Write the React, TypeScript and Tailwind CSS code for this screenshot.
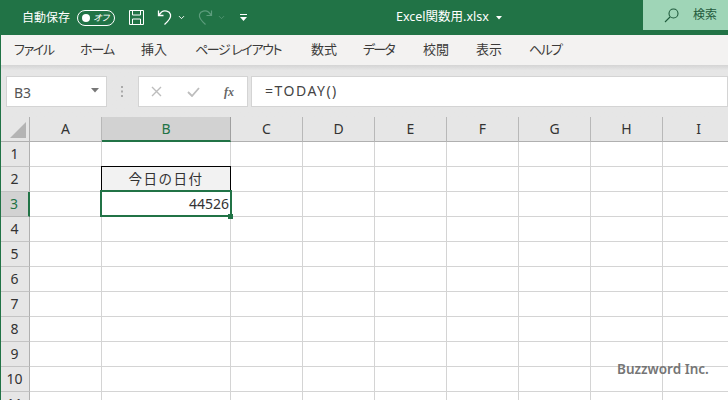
import { ChevronDown } from "lucide-react";

const FONT = "font-['Noto_Sans','Noto_Sans_CJK_JP',sans-serif]";
const COLS = [
  { key: "A", width: "w-[72px]" },
  { key: "B", width: "w-[129px]" },
  { key: "C", width: "w-[72px]" },
  { key: "D", width: "w-[72px]" },
  { key: "E", width: "w-[72px]" },
  { key: "F", width: "w-[72px]" },
  { key: "G", width: "w-[72px]" },
  { key: "H", width: "w-[72px]" },
  { key: "I", width: "w-[72px]" },
];
const ROWS = [1, 2, 3, 4, 5, 6, 7, 8, 9, 10, 11];
const TABS = [
  { label: "ファイル", width: "w-[66px] tracking-[-1.3px]" },
  { label: "ホーム", width: "w-[61px] tracking-[-1px]" },
  { label: "挿入", width: "w-[54px]" },
  { label: "ページ レイアウト", width: "w-[116px] tracking-[-1.4px]" },
  { label: "数式", width: "w-[52px]" },
  { label: "データ", width: "w-[60px] tracking-[-1.8px]" },
  { label: "校閲", width: "w-[53px]" },
  { label: "表示", width: "w-[53px]" },
  { label: "ヘルプ", width: "w-[60px] tracking-[-1.6px]" },
];

function TitleBar() {
  return (
    <div className="flex h-[35px] items-center bg-[#217346] text-white [&>*]:shrink-0">
      <span className="ml-[22px] w-[55px] text-[12px] leading-none">自動保存</span>
      <div className="flex h-[16px] w-[38px] items-center justify-between rounded-full border border-white pl-[4px] pr-[5px]">
        <span className="h-[8px] w-[8px] rounded-full bg-white" />
        <span className="text-[9px] italic leading-none [font-feature-settings:'palt']">オフ</span>
      </div>
      {/* save */}
      <svg className="ml-[13px]" width="17" height="17" viewBox="0 0 17 17" fill="none" stroke="#fff" strokeWidth="1">
        <path d="M1.500 1.500h14v14h-14z" />
        <path d="M4.500 1.500v4.500h8v-4.500M4.500 15.500v-5.500h8v5.500" />
      </svg>
      {/* undo */}
      <svg className="ml-[12px]" width="16" height="17" viewBox="0 0 16 17" fill="none" stroke="#fff" strokeWidth="1.300">
        <path d="M1.500 1.500v5h5M1.500 6.500l3-3.500c3-2 8-1 9 2.500 .7 3-2 6.500-6 10" />
      </svg>
      <ChevronDown className="ml-[4px]" size={9} strokeWidth={2.5} />
      {/* redo, disabled */}
      <svg className="ml-[11px]" width="16" height="17" viewBox="0 0 16 17" fill="none" stroke="#5c9c7c" strokeWidth="1.200">
        <path d="M14.500 1.500v5h-5M14.500 6.500l-3-3.500c-3-2-8-1-9 2.500-.7 3 2 6.500 6 10" />
      </svg>
      <ChevronDown className="ml-[4px] text-[#5c9c7c]" size={9} strokeWidth={2} />
      {/* customize */}
      <svg className="ml-[13px]" width="9" height="9" viewBox="0 0 9 9" fill="#fff">
        <path d="M1 1h7v1H1zM1 4h7L4.500 8z" />
      </svg>
      <span className="ml-[148px] w-[100px] text-[12.500px] leading-none">Excel関数用.xlsx</span>
      <svg width="6" height="4" viewBox="0 0 6 4" fill="#fff">
        <path d="M0 0h6L3 3.500z" />
      </svg>
      <div className="ml-[141px] flex h-[30px] w-[85px] items-center self-start bg-[#9fd5b7] text-[#1f5a3c]">
        <svg className="ml-[21px]" width="15" height="15" viewBox="0 0 15 15" fill="none" stroke="#1f5a3c" strokeWidth="1.100">
          <circle cx="9.500" cy="5.500" r="4.500" />
          <path d="M6 9l-5 5" />
        </svg>
        <span className="ml-[14px] text-[12px] leading-none">検索</span>
      </div>
    </div>
  );
}

function Ribbon() {
  return (
    <div className="flex h-[30px] items-center bg-[#f3f2f1] pb-[1px] pl-[14px] text-[13px] text-[#3b3a39] [font-feature-settings:'palt']">
      {TABS.map((t) => (
        <span key={t.label} className={`${t.width} whitespace-nowrap leading-none`}>
          {t.label}
        </span>
      ))}
    </div>
  );
}

function FormulaBar() {
  return (
    <div className="h-[52px] bg-gradient-to-b from-[#d4d4d4] from-0% via-[#e6e6e6] via-10% to-[#e6e6e6] pl-[6px] pt-[11px]">
      <div className="flex h-[31px] items-stretch">
        <div className="flex w-[101px] items-center justify-between border border-[#d4d4d4] bg-white pl-[7px] pr-[7px]">
          <span className="pt-[3px] text-[14px] leading-none text-[#555]">B3</span>
          <svg className="mb-[3px]" width="8" height="5" viewBox="0 0 8 5" fill="#777">
            <path d="M0 0h8L4 4.500z" />
          </svg>
        </div>
        <div className="flex w-[31px] items-center justify-center">
          <svg width="3" height="11" viewBox="0 0 3 11" fill="#aaa">
            <path d="M0 0h2v2H0zM0 4.500h2v2H0zM0 9h2v2H0z" />
          </svg>
        </div>
        <div className="flex w-[110px] items-center border border-[#d4d4d4] bg-white pl-[12px]">
          <svg width="11" height="11" viewBox="0 0 11 11" fill="none" stroke="#bdbdbd" strokeWidth="1.400">
            <path d="M1 1l9 9M10 1l-9 9" />
          </svg>
          <svg className="ml-[25px]" width="13" height="11" viewBox="0 0 13 11" fill="none" stroke="#bdbdbd" strokeWidth="1.800">
            <path d="M1 6l4 4 7-8" />
          </svg>
          <span className="ml-[24px] font-['Liberation_Serif',serif] text-[12px] font-bold italic leading-none text-[#666]">
            fx
          </span>
        </div>
        <div className="ml-[3px] flex flex-1 items-center border border-[#d4d4d4] bg-white pb-[1px] pl-[13px]">
          <span className="text-[14px] leading-none tracking-[1.500px] text-[#444]">=TODAY()</span>
        </div>
      </div>
    </div>
  );
}

function Cell({ col, row }: { col: string; row: number }) {
  const width = COLS.find((c) => c.key === col)!.width;
  if (col === "B" && row === 2) {
    return (
      <div className={`${width} relative flex shrink-0 items-center justify-center border-r border-b border-[#d4d4d4] bg-[#f2f2f2] text-[13.500px] tracking-[1.500px] text-[#333]`}>
        今日の日付
        <div className="absolute -left-[1px] -top-[1px] -right-[1px] bottom-[-1px] border border-black" />
      </div>
    );
  }
  if (col === "B" && row === 3) {
    return (
      <div className={`${width} relative z-10 flex shrink-0 items-center justify-end border-r border-b border-[#d4d4d4] pb-[1px] pr-[1px] text-[14px] text-[#333]`}>
        44526
        <div className="absolute -left-[2px] -top-[2px] -right-[2px] -bottom-[1px] border-2 border-[#217346]" />
        <div className="absolute -bottom-[3px] -right-[3px] h-[5px] w-[5px] bg-[#217346]" />
      </div>
    );
  }
  return <div className={`${width} shrink-0 border-r border-b border-[#d4d4d4]`} />;
}

function Sheet() {
  return (
    <div className="relative bg-white text-[#333]">
      <div className="flex h-[25px] bg-[#e6e6e6]">
        <div className="flex w-[30px] shrink-0 items-end justify-end border-r border-b border-[#b0b0b0] p-[2px]">
          <svg width="18" height="18" viewBox="0 0 18 18" fill="#b4b4b4">
            <path d="M17 1v16H1z" />
          </svg>
        </div>
        {COLS.map((c) => (
          <div
            key={c.key}
            className={
              c.key === "B"
                ? `${c.width} flex shrink-0 items-center justify-center border-r border-b-2 border-r-[#a0a0a0] border-b-[#217346] bg-[#d2d2d2] text-[14px] text-[#217346]`
                : `${c.width} flex shrink-0 items-center justify-center border-r border-b border-r-[#b8b8b8] border-b-[#b0b0b0] pb-[1px] text-[14px]`
            }
          >
            {c.key}
          </div>
        ))}
      </div>
      {ROWS.map((r) => (
        <div key={r} className="flex h-[25px]">
          <div
            className={
              r === 3
                ? "flex w-[30px] shrink-0 items-center justify-center border-r-2 border-b border-r-[#217346] border-b-[#b8b8b8] bg-[#d2d2d2] pb-[1px] text-[14px] text-[#217346]"
                : "flex w-[30px] shrink-0 items-center justify-center border-r border-b border-r-[#b0b0b0] border-b-[#c4c4c4] bg-[#e6e6e6] pb-[1px] text-[14px]"
            }
          >
            {r}
          </div>
          {COLS.map((c) => (
            <Cell key={c.key} col={c.key} row={r} />
          ))}
        </div>
      ))}
      <span className="absolute left-[617px] top-[246px] text-[13.500px] font-semibold leading-none text-[#757575]">
        Buzzword Inc.
      </span>
    </div>
  );
}

export default function App() {
  return (
    <div className={`${FONT} relative h-[400px] w-[728px] overflow-hidden bg-white`}>
      <TitleBar />
      <Ribbon />
      <FormulaBar />
      <Sheet />
      <div className="absolute bottom-0 left-0 top-[35px] w-px bg-[#217346]" />
    </div>
  );
}
